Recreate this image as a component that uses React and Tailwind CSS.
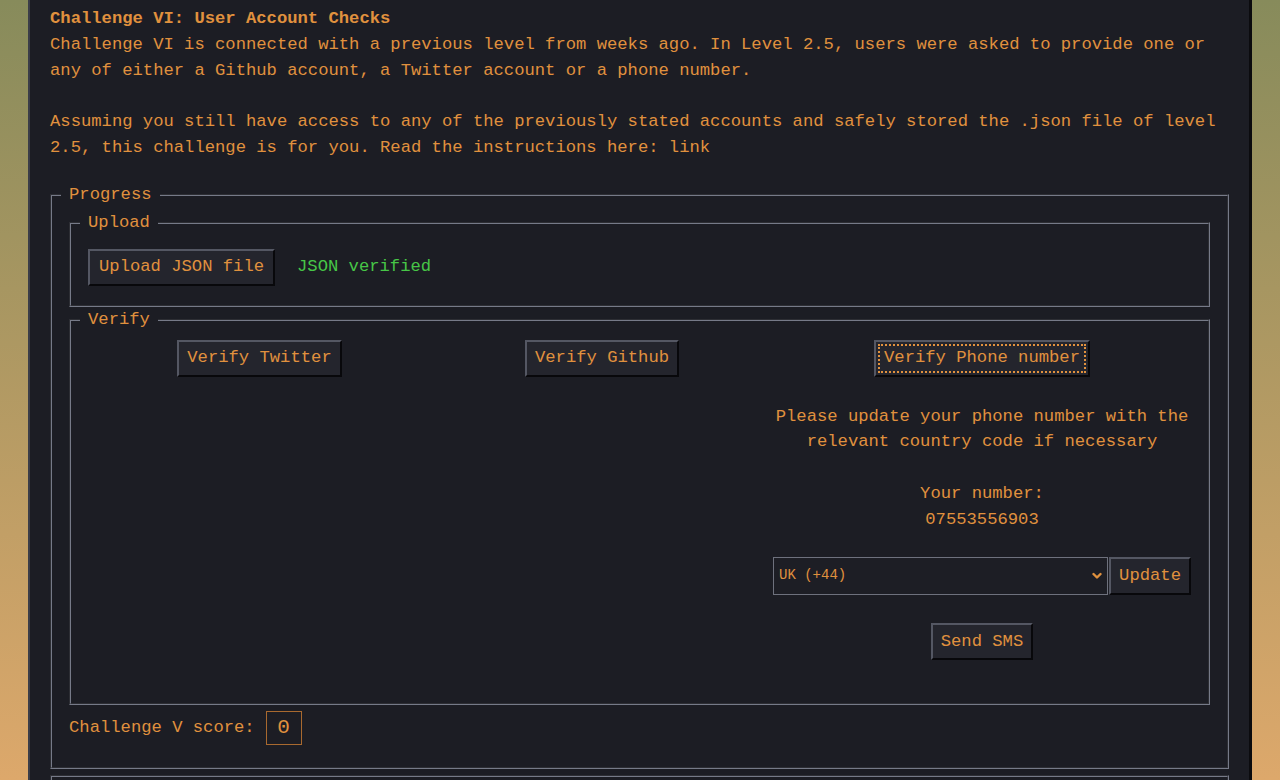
import React from 'react';

const groove = 'border-2 [border-style:groove] border-[#767a88]';

function Btn({ children, focus = false, className = '' }) {
  return (
    <button
      type="button"
      className={`h-[37px] whitespace-nowrap border-2 border-t-[#545763] border-l-[#545763] border-b-[#08080b] border-r-[#08080b] bg-[#24252d] px-[8px] leading-[26px] text-[#e0913e] ${
        focus ? 'outline-2 outline-dotted outline-[#e0913e] outline-offset-[-6px]' : ''
      } ${className}`}
    >
      {children}
    </button>
  );
}

function Box({ legend, children, className = '' }) {
  return (
    <fieldset className={`${groove} px-[17px] ${className}`}>
      <legend className="ml-[-8px] px-[8px] leading-[26px]">{legend}</legend>
      {children}
    </fieldset>
  );
}

export default function App() {
  return (
    <div className="h-[780px] overflow-hidden bg-gradient-to-b from-[#878b5b] to-[#dda86b] px-[28px] font-['Liberation_Mono',monospace]">
      <div className="h-full border-l-2 border-r-[3px] border-l-[#3b3d48] border-r-[#0b0b0e] bg-[#1c1d24] px-[20px] pt-[6px] text-[17.2px] leading-[25.75px] text-[#e0913e]">
        <h1 className="font-bold">Challenge VI: User Account Checks</h1>
        <p>
          Challenge VI is connected with a previous level from weeks ago. In Level 2.5, users were asked to provide one or
          any of either a Github account, a Twitter account or a phone number.
          <br />
          <br />
          Assuming you still have access to any of the previously stated accounts and safely stored the .json file of level
          2.5, this challenge is for you. Read the instructions here: link
        </p>

        <Box legend="Progress" className="mt-[21px] pb-[22px]">
          <div className="pt-[2px]">
            <Box legend="Upload">
              <div className="flex items-center pt-[13px] pb-[19px]">
                <Btn className="px-[9px]">Upload JSON file</Btn>
                <span className="ml-[22px] text-[#47c647]">JSON verified</span>
              </div>
            </Box>

            <Box legend="Verify">
              <div className="grid grid-cols-[343px_342px_1fr] pt-[7px] pb-[43px]">
                <div className="flex items-start justify-center">
                  <Btn>Verify Twitter</Btn>
                </div>
                <div className="flex items-start justify-center">
                  <Btn>Verify Github</Btn>
                </div>
                <div className="flex flex-col items-center">
                  <Btn focus>Verify Phone number</Btn>
                  <p className="mt-[27px] text-center whitespace-nowrap">
                    Please update your phone number with the
                    <br />
                    relevant country code if necessary
                  </p>
                  <p className="mt-[25.75px] text-center">
                    Your number:
                    <br />
                    07553556903
                  </p>
                  <div className="mt-[25px] flex w-full gap-[1px]">
                    <div className="relative flex-1">
                      <select
                        defaultValue="uk"
                        className="h-[38px] w-full appearance-none border border-[#6e717d] bg-[#1d1e25] pl-[5px] text-[14px] text-[#e0913e] outline-none"
                      >
                        <option value="uk">UK (+44)</option>
                        <option value="us">US (+1)</option>
                      </select>
                      <svg
                        className="pointer-events-none absolute right-[6px] top-[15px]"
                        width="10"
                        height="8"
                        viewBox="0 0 10 8"
                        fill="none"
                      >
                        <path d="M1.5 2 L5 5.5 L8.5 2" stroke="#e0913e" strokeWidth="2.4" strokeLinecap="round" strokeLinejoin="round" />
                      </svg>
                    </div>
                    <Btn className="h-[38px]">Update</Btn>
                  </div>
                  <div className="mt-[28px]">
                    <Btn>Send SMS</Btn>
                  </div>
                </div>
              </div>
            </Box>

            <div className="mt-[6px] flex items-center">
              <span>Challenge V score:</span>
              <span className="ml-[11px] flex h-[34px] w-[36px] items-center justify-center border border-[#a8692f] text-[21px]">
                0
              </span>
            </div>
          </div>
        </Box>

        <div className={`mt-[6px] h-10 ${groove} border-b-0`} />
      </div>
    </div>
  );
}
